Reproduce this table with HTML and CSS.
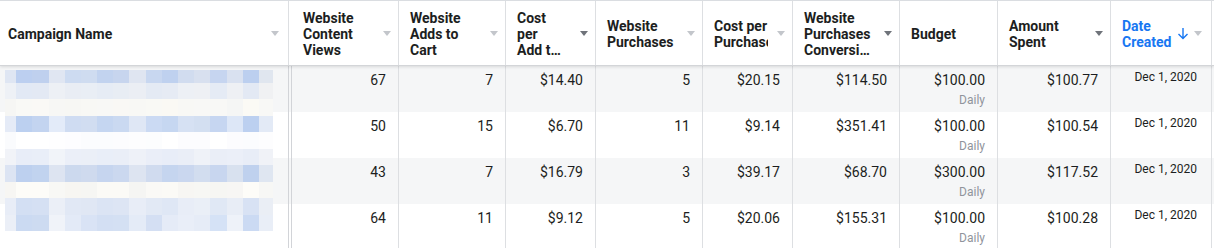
FILE: index.html
```html
<!DOCTYPE html>
<html>
  <head>
    <title>Ads Manager - Campaigns</title>
    <link rel="stylesheet" href="styles.css">
  </head>
  <body>
    <div id="report">
      <div class="row header">
        <div class="cell name-col"><span class="label">Campaign Name</span><span class="caret"></span></div>
        <div class="cell"><span class="label">Website<br>Content<br>Views</span><span class="caret"></span></div>
        <div class="cell"><span class="label">Website<br>Adds to<br>Cart</span><span class="caret"></span></div>
        <div class="cell"><span class="label">Cost<br>per<br>Add t…</span><span class="caret dark"></span></div>
        <div class="cell"><span class="label">Website<br>Purchases</span><span class="caret"></span></div>
        <div class="cell"><span class="label clipped">Cost per<br>Purchase</span><span class="caret"></span></div>
        <div class="cell"><span class="label">Website<br>Purchases<br>Conversi…</span><span class="caret dark"></span></div>
        <div class="cell"><span class="label">Budget</span></div>
        <div class="cell"><span class="label">Amount<br>Spent</span><span class="caret dark"></span></div>
        <div class="cell sorted">
          <span class="label">Date<br>Created</span>
          <span class="sort">
            <svg width="12" height="13" viewBox="0 0 12 13"><path d="M6 1v10.5M1.5 7l4.5 4.5L10.5 7" fill="none" stroke="#1877f2" stroke-width="1.4"/></svg>
            <span class="caret"></span>
          </span>
        </div>
        <div class="filler"></div>
      </div>

      <div id="rows">
        <div class="row">
          <div class="cell name-col"></div>
          <div class="cell">67</div>
          <div class="cell">7</div>
          <div class="cell">$14.40</div>
          <div class="cell">5</div>
          <div class="cell">$20.15</div>
          <div class="cell">$114.50</div>
          <div class="cell">$100.00<span class="sub">Daily</span></div>
          <div class="cell">$100.77</div>
          <div class="cell date">Dec 1, 2020</div>
          <div class="filler"></div>
        </div>
        <div class="row">
          <div class="cell name-col"></div>
          <div class="cell">50</div>
          <div class="cell">15</div>
          <div class="cell">$6.70</div>
          <div class="cell">11</div>
          <div class="cell">$9.14</div>
          <div class="cell">$351.41</div>
          <div class="cell">$100.00<span class="sub">Daily</span></div>
          <div class="cell">$100.54</div>
          <div class="cell date">Dec 1, 2020</div>
          <div class="filler"></div>
        </div>
        <div class="row">
          <div class="cell name-col"></div>
          <div class="cell">43</div>
          <div class="cell">7</div>
          <div class="cell">$16.79</div>
          <div class="cell">3</div>
          <div class="cell">$39.17</div>
          <div class="cell">$68.70</div>
          <div class="cell">$300.00<span class="sub">Daily</span></div>
          <div class="cell">$117.52</div>
          <div class="cell date">Dec 1, 2020</div>
          <div class="filler"></div>
        </div>
        <div class="row">
          <div class="cell name-col"></div>
          <div class="cell">64</div>
          <div class="cell">11</div>
          <div class="cell">$9.12</div>
          <div class="cell">5</div>
          <div class="cell">$20.06</div>
          <div class="cell">$155.31</div>
          <div class="cell">$100.00<span class="sub">Daily</span></div>
          <div class="cell">$100.28</div>
          <div class="cell date">Dec 1, 2020</div>
          <div class="filler"></div>
        </div>

        <!-- campaign names are pixelated out -->
        <div id="redact"></div>
      </div>
    </div>

    <script>
      var widths = [11, 16, 17, 16, 16, 16, 16, 16, 17, 16, 16, 16, 16, 17, 16, 16, 14];
      var heights = [13, 16, 17, 16, 17, 16, 17, 16, 17, 16];
      var shades = [
        ['#dfe6f3','#bccff0','#bfd0ee','#e0e6f2','#cddbf1','#cfdcf0','#c2d3ef','#c7d5ee','#dfe5f1','#c8d7f0','#bfd1ef','#d1dcef','#d8e0ef','#c6d5f0','#d9e1f0','#bccfef','#e0e6ef'],
        ['#eef1f6','#e2e9f5','#e3e9f4','#edf0f5','#e9edf4','#e9eef5','#e6ecf5','#e8edf4','#ebeef4','#e4eaf4','#e6ebf4','#edf0f5','#eef0f4','#e5ebf5','#eef0f4','#e3e9f4','#f0f1f3'],
        ['#f6f6f4','#f9f9f6','#faf9f6','#f7f7f5','#f7f7f4','#f8f8f5','#f8f8f6','#f9f8f5','#f8f8f5','#f9f9f5','#faf9f4','#f8f8f5','#f8f8f6','#f8f8f6','#f5f6f5','#fbfaf5','#f8f8f6'],
        ['#e5ebf7','#bcd0f0','#c3d4f0','#e3ebf9','#cfdcf2','#d1ddf1','#c5d6f1','#cad9f1','#dfe7f5','#cbdaf3','#c6d7f1','#d6e1f3','#d3dff1','#c6d6f1','#dde7f7','#bcd0f0','#e3eaf6'],
        ['#fafbfd','#ffffff','#ffffff','#fefeff','#fdfdff','#fbfcfe','#fbfcfe','#fcfcfe','#fdfdfe','#fcfdfe','#ffffff','#fcfcfe','#fcfcfe','#ffffff','#fcfcfe','#fbfcfe','#fdfdfe'],
        ['#f1f3f8','#e8edf8','#e9eef8','#f1f4f9','#ebeff8','#ebeff7','#e9eef8','#eaeef7','#eef1f8','#eaeef8','#e8edf8','#eaeef7','#eff2f8','#eaeef7','#ebeff8','#e8edf7','#f0f2f7'],
        ['#dce4f3','#bdd0ef','#c1d3ef','#dde4f1','#ccd9ee','#cfdaee','#c6d5ef','#cbd8ef','#dde4f1','#d0dbef','#c5d5ef','#cad7ef','#d2ddef','#c8d6ef','#d8e1ef','#bfd1ee','#dfe6f1'],
        ['#f7f6f3','#fdfcf8','#fdfcf8','#f8f8f5','#f7f6f2','#f6f6f3','#fbfaf6','#fbfaf6','#f5f5f3','#faf9f6','#fbfaf6','#f7f6f3','#f7f7f4','#f6f6f3','#f7f6f4','#fdfcf8','#f7f7f5'],
        ['#e8edf7','#d3dff3','#d5e0f3','#ebeff7','#e1e8f5','#e0e7f4','#dbe4f4','#dde5f4','#e8edf7','#e2e9f5','#dfe7f5','#e8edf7','#eaeff7','#e0e8f5','#e8edf6','#d8e2f4','#eaeef5'],
        ['#ebeff7','#cbdaf2','#cddbf1','#f0f3f9','#e3eaf7','#d9e3f5','#d3dff3','#d4e0f3','#e4ebf7','#d4dff3','#e5ebf7','#e9eef8','#e6ecf7','#d5e2f6','#eef2f9','#cbdaf3','#e9eef7']
      ];

      var redact = document.getElementById('redact');
      redact.style.gridTemplateColumns = widths.map(w => w + 'px').join(' ');
      redact.style.gridTemplateRows = heights.map(h => h + 'px').join(' ');

      shades.forEach(function(line) {
        line.forEach(function(color) {
          var block = document.createElement('div');
          block.style.background = color;
          redact.appendChild(block);
        });
      });
    </script>
  </body>
</html>
```

FILE: styles.css
```css
body { margin: 0; background: #fff; color: #1c1e21; font-family: Roboto, "Liberation Sans", Arial, sans-serif; }

#report { width: 1214px; overflow: hidden; }

.row {
  display: grid;
  grid-template-columns: 292px 107px 107px 90px 107px 90px 107px 98px 113px 101px 2px;
  height: 46px;
}

.cell {
  box-sizing: border-box;
  border-right: 1px solid #dddfe2;
  min-width: 0;
}

/* Header */
.header {
  position: relative;
  z-index: 1;
  height: 66px;
  box-sizing: border-box;
  border-top: 1px solid #dadde1;
  border-bottom: 1px solid #d3d5d8;
  box-shadow: 0 1px 3px rgba(0, 0, 0, 0.12);
  background: #fff;
}

.header .cell {
  display: flex;
  align-items: center;
  justify-content: space-between;
  padding: 2px 7px 0 11px;
  font-size: 14px;
  font-weight: bold;
  line-height: 16px;
}

.header .name-col {
  padding-left: 8px;
  padding-right: 9px;
  margin-right: 3px;
}

.label { white-space: nowrap; }

.label.clipped {
  width: 54px;
  overflow: hidden;
}

.caret {
  flex: none;
  width: 0;
  height: 0;
  border-left: 4px solid transparent;
  border-right: 4px solid transparent;
  border-top: 5px solid #c3c6cb;
  margin-top: -1px;
}

.caret.dark { border-top-color: #6f737a; }

.sorted .label { color: #1877f2; }

.sort {
  display: flex;
  align-items: center;
  gap: 5px;
  margin-right: 2px;
}

.sort svg { margin-top: -2px; }

/* Body */
#rows { position: relative; }

#rows .row:nth-child(odd) { background: #f5f6f7; }

#rows .cell {
  padding: 5px 12px 0;
  text-align: right;
  font-size: 14px;
  line-height: 18px;
}

#rows .name-col { border-right: 4px double #d2d4d8; }

#rows .date {
  padding-top: 3px;
  padding-right: 14px;
  font-size: 12px;
  line-height: 16px;
}

.sub {
  display: block;
  margin-top: 3px;
  color: #90949c;
  font-size: 12px;
  line-height: 16px;
}

#redact {
  position: absolute;
  top: 4px;
  left: 5px;
  display: grid;
}
```
